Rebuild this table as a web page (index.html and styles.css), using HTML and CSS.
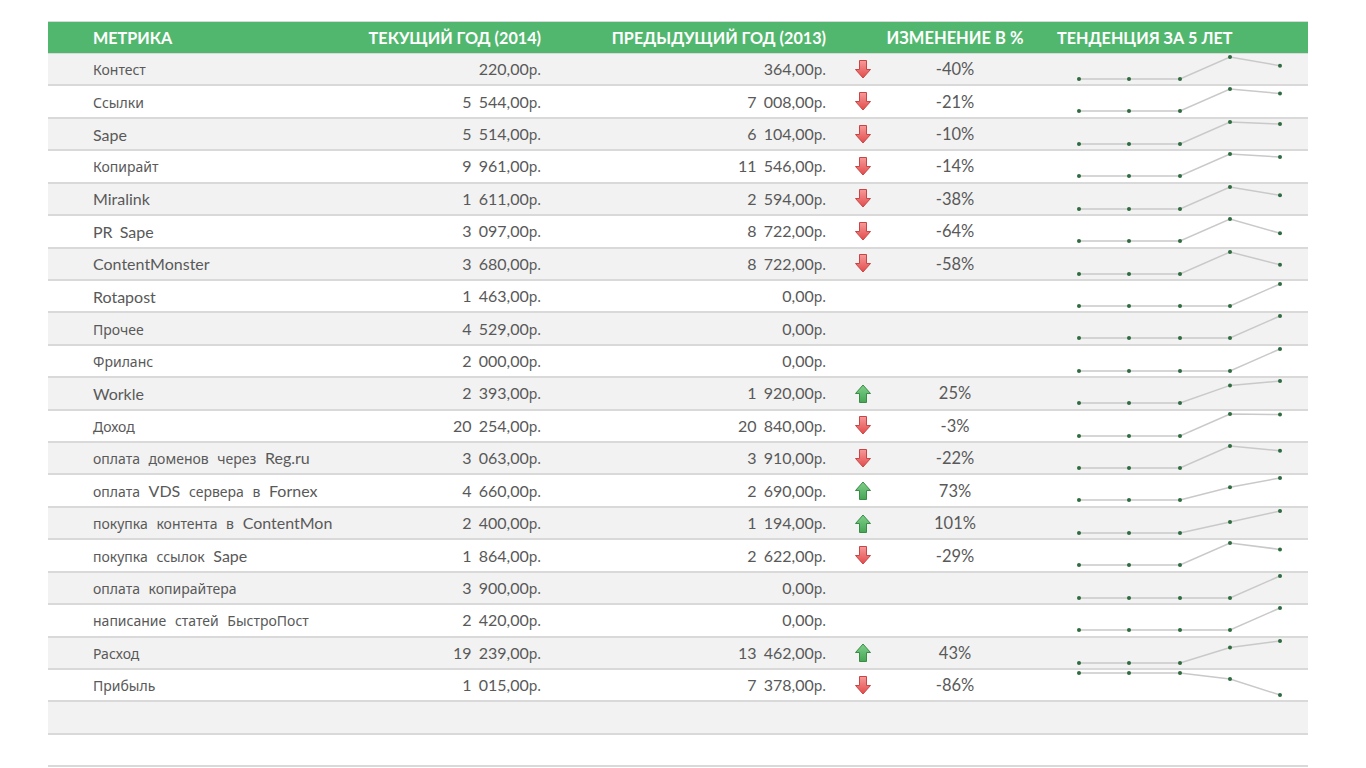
FILE: index.html
```html
<!DOCTYPE html>
<html lang="ru">
<head>
<meta charset="utf-8">
<title>Метрики</title>
<link rel="stylesheet" href="styles.css">
</head>
<body>
<svg class="defs" width="0" height="0" aria-hidden="true">
  <defs>
    <linearGradient id="gr" x1="0" y1="0" x2="0" y2="1">
      <stop offset="0" stop-color="#f79a9a"/>
      <stop offset="1" stop-color="#e24b4b"/>
    </linearGradient>
    <linearGradient id="gg" x1="0" y1="1" x2="0" y2="0">
      <stop offset="0" stop-color="#45a655"/>
      <stop offset="1" stop-color="#7fd08a"/>
    </linearGradient>
    <symbol id="down" viewBox="0 0 16 19">
      <path d="M4.5 0.5H11.5V9.5H15.5L8 18L0.5 9.5H4.5Z" fill="url(#gr)" stroke="#c94444" stroke-width="1"/>
    </symbol>
    <symbol id="up" viewBox="0 0 16 19">
      <path d="M4.5 18.5H11.5V9.5H15.5L8 1L0.5 9.5H4.5Z" fill="url(#gg)" stroke="#3b8a48" stroke-width="1"/>
    </symbol>
  </defs>
</svg>
<div class="sheet">
  <div class="head">
    <div class="c-name">МЕТРИКА</div>
    <div class="c-cur">ТЕКУЩИЙ ГОД (2014)</div>
    <div class="c-prev">ПРЕДЫДУЩИЙ ГОД (2013)</div>
    <div class="c-arrow"></div>
    <div class="c-pct">ИЗМЕНЕНИЕ В %</div>
    <div class="c-trend">ТЕНДЕНЦИЯ ЗА 5 ЛЕТ</div>
  </div>
  <div class="rows">
    <div class="row">
      <div class="c-name"><span class="cy">Контест</span></div>
      <div class="c-cur">220,00<span class="cy">р.</span></div>
      <div class="c-prev">364,00<span class="cy">р.</span></div>
      <div class="c-arrow"><svg class="arr"><use href="#down"/></svg></div>
      <div class="c-pct">-40%</div>
      <div class="c-trend"><svg class="spark" viewBox="0 0 283 30"><polyline points="54,25 104,25 155,25 205,3 255,11.7"/><g><circle cx="54" cy="25"/><circle cx="104" cy="25"/><circle cx="155" cy="25"/><circle cx="205" cy="3"/><circle cx="255" cy="11.7"/></g></svg></div>
    </div>
    <div class="row">
      <div class="c-name"><span class="cy">Ссылки</span></div>
      <div class="c-cur">5 544,00<span class="cy">р.</span></div>
      <div class="c-prev">7 008,00<span class="cy">р.</span></div>
      <div class="c-arrow"><svg class="arr"><use href="#down"/></svg></div>
      <div class="c-pct">-21%</div>
      <div class="c-trend"><svg class="spark" viewBox="0 0 283 30"><polyline points="54,25 104,25 155,25 205,3 255,7.6"/><g><circle cx="54" cy="25"/><circle cx="104" cy="25"/><circle cx="155" cy="25"/><circle cx="205" cy="3"/><circle cx="255" cy="7.6"/></g></svg></div>
    </div>
    <div class="row">
      <div class="c-name">Sape</div>
      <div class="c-cur">5 514,00<span class="cy">р.</span></div>
      <div class="c-prev">6 104,00<span class="cy">р.</span></div>
      <div class="c-arrow"><svg class="arr"><use href="#down"/></svg></div>
      <div class="c-pct">-10%</div>
      <div class="c-trend"><svg class="spark" viewBox="0 0 283 30"><polyline points="54,25 104,25 155,25 205,3 255,5.1"/><g><circle cx="54" cy="25"/><circle cx="104" cy="25"/><circle cx="155" cy="25"/><circle cx="205" cy="3"/><circle cx="255" cy="5.1"/></g></svg></div>
    </div>
    <div class="row">
      <div class="c-name"><span class="cy">Копирайт</span></div>
      <div class="c-cur">9 961,00<span class="cy">р.</span></div>
      <div class="c-prev">11 546,00<span class="cy">р.</span></div>
      <div class="c-arrow"><svg class="arr"><use href="#down"/></svg></div>
      <div class="c-pct">-14%</div>
      <div class="c-trend"><svg class="spark" viewBox="0 0 283 30"><polyline points="54,25 104,25 155,25 205,3 255,6"/><g><circle cx="54" cy="25"/><circle cx="104" cy="25"/><circle cx="155" cy="25"/><circle cx="205" cy="3"/><circle cx="255" cy="6"/></g></svg></div>
    </div>
    <div class="row">
      <div class="c-name">Miralink</div>
      <div class="c-cur">1 611,00<span class="cy">р.</span></div>
      <div class="c-prev">2 594,00<span class="cy">р.</span></div>
      <div class="c-arrow"><svg class="arr"><use href="#down"/></svg></div>
      <div class="c-pct">-38%</div>
      <div class="c-trend"><svg class="spark" viewBox="0 0 283 30"><polyline points="54,25 104,25 155,25 205,3 255,11.3"/><g><circle cx="54" cy="25"/><circle cx="104" cy="25"/><circle cx="155" cy="25"/><circle cx="205" cy="3"/><circle cx="255" cy="11.3"/></g></svg></div>
    </div>
    <div class="row">
      <div class="c-name">PR Sape</div>
      <div class="c-cur">3 097,00<span class="cy">р.</span></div>
      <div class="c-prev">8 722,00<span class="cy">р.</span></div>
      <div class="c-arrow"><svg class="arr"><use href="#down"/></svg></div>
      <div class="c-pct">-64%</div>
      <div class="c-trend"><svg class="spark" viewBox="0 0 283 30"><polyline points="54,25 104,25 155,25 205,3 255,17.2"/><g><circle cx="54" cy="25"/><circle cx="104" cy="25"/><circle cx="155" cy="25"/><circle cx="205" cy="3"/><circle cx="255" cy="17.2"/></g></svg></div>
    </div>
    <div class="row">
      <div class="c-name">ContentMonster</div>
      <div class="c-cur">3 680,00<span class="cy">р.</span></div>
      <div class="c-prev">8 722,00<span class="cy">р.</span></div>
      <div class="c-arrow"><svg class="arr"><use href="#down"/></svg></div>
      <div class="c-pct">-58%</div>
      <div class="c-trend"><svg class="spark" viewBox="0 0 283 30"><polyline points="54,25 104,25 155,25 205,3 255,15.7"/><g><circle cx="54" cy="25"/><circle cx="104" cy="25"/><circle cx="155" cy="25"/><circle cx="205" cy="3"/><circle cx="255" cy="15.7"/></g></svg></div>
    </div>
    <div class="row">
      <div class="c-name">Rotapost</div>
      <div class="c-cur">1 463,00<span class="cy">р.</span></div>
      <div class="c-prev">0,00<span class="cy">р.</span></div>
      <div class="c-arrow"></div>
      <div class="c-pct"></div>
      <div class="c-trend"><svg class="spark" viewBox="0 0 283 30"><polyline points="54,25 104,25 155,25 205,25 255,3"/><g><circle cx="54" cy="25"/><circle cx="104" cy="25"/><circle cx="155" cy="25"/><circle cx="205" cy="25"/><circle cx="255" cy="3"/></g></svg></div>
    </div>
    <div class="row">
      <div class="c-name"><span class="cy">Прочее</span></div>
      <div class="c-cur">4 529,00<span class="cy">р.</span></div>
      <div class="c-prev">0,00<span class="cy">р.</span></div>
      <div class="c-arrow"></div>
      <div class="c-pct"></div>
      <div class="c-trend"><svg class="spark" viewBox="0 0 283 30"><polyline points="54,25 104,25 155,25 205,25 255,3"/><g><circle cx="54" cy="25"/><circle cx="104" cy="25"/><circle cx="155" cy="25"/><circle cx="205" cy="25"/><circle cx="255" cy="3"/></g></svg></div>
    </div>
    <div class="row">
      <div class="c-name"><span class="cy">Фриланс</span></div>
      <div class="c-cur">2 000,00<span class="cy">р.</span></div>
      <div class="c-prev">0,00<span class="cy">р.</span></div>
      <div class="c-arrow"></div>
      <div class="c-pct"></div>
      <div class="c-trend"><svg class="spark" viewBox="0 0 283 30"><polyline points="54,25 104,25 155,25 205,25 255,3"/><g><circle cx="54" cy="25"/><circle cx="104" cy="25"/><circle cx="155" cy="25"/><circle cx="205" cy="25"/><circle cx="255" cy="3"/></g></svg></div>
    </div>
    <div class="row">
      <div class="c-name">Workle</div>
      <div class="c-cur">2 393,00<span class="cy">р.</span></div>
      <div class="c-prev">1 920,00<span class="cy">р.</span></div>
      <div class="c-arrow"><svg class="arr"><use href="#up"/></svg></div>
      <div class="c-pct">25%</div>
      <div class="c-trend"><svg class="spark" viewBox="0 0 283 30"><polyline points="54,25 104,25 155,25 205,7.4 255,3"/><g><circle cx="54" cy="25"/><circle cx="104" cy="25"/><circle cx="155" cy="25"/><circle cx="205" cy="7.4"/><circle cx="255" cy="3"/></g></svg></div>
    </div>
    <div class="row">
      <div class="c-name"><span class="cy">Доход</span></div>
      <div class="c-cur">20 254,00<span class="cy">р.</span></div>
      <div class="c-prev">20 840,00<span class="cy">р.</span></div>
      <div class="c-arrow"><svg class="arr"><use href="#down"/></svg></div>
      <div class="c-pct">-3%</div>
      <div class="c-trend"><svg class="spark" viewBox="0 0 283 30"><polyline points="54,25 104,25 155,25 205,3 255,3.6"/><g><circle cx="54" cy="25"/><circle cx="104" cy="25"/><circle cx="155" cy="25"/><circle cx="205" cy="3"/><circle cx="255" cy="3.6"/></g></svg></div>
    </div>
    <div class="row">
      <div class="c-name"><span class="cy">оплата доменов через </span>Reg.ru</div>
      <div class="c-cur">3 063,00<span class="cy">р.</span></div>
      <div class="c-prev">3 910,00<span class="cy">р.</span></div>
      <div class="c-arrow"><svg class="arr"><use href="#down"/></svg></div>
      <div class="c-pct">-22%</div>
      <div class="c-trend"><svg class="spark" viewBox="0 0 283 30"><polyline points="54,25 104,25 155,25 205,3 255,7.8"/><g><circle cx="54" cy="25"/><circle cx="104" cy="25"/><circle cx="155" cy="25"/><circle cx="205" cy="3"/><circle cx="255" cy="7.8"/></g></svg></div>
    </div>
    <div class="row">
      <div class="c-name"><span class="cy">оплата </span>VDS<span class="cy"> сервера в </span>Fornex</div>
      <div class="c-cur">4 660,00<span class="cy">р.</span></div>
      <div class="c-prev">2 690,00<span class="cy">р.</span></div>
      <div class="c-arrow"><svg class="arr"><use href="#up"/></svg></div>
      <div class="c-pct">73%</div>
      <div class="c-trend"><svg class="spark" viewBox="0 0 283 30"><polyline points="54,25 104,25 155,25 205,12.3 255,3"/><g><circle cx="54" cy="25"/><circle cx="104" cy="25"/><circle cx="155" cy="25"/><circle cx="205" cy="12.3"/><circle cx="255" cy="3"/></g></svg></div>
    </div>
    <div class="row">
      <div class="c-name"><span class="cy">покупка контента в </span>ContentMon</div>
      <div class="c-cur">2 400,00<span class="cy">р.</span></div>
      <div class="c-prev">1 194,00<span class="cy">р.</span></div>
      <div class="c-arrow"><svg class="arr"><use href="#up"/></svg></div>
      <div class="c-pct">101%</div>
      <div class="c-trend"><svg class="spark" viewBox="0 0 283 30"><polyline points="54,25 104,25 155,25 205,14.1 255,3"/><g><circle cx="54" cy="25"/><circle cx="104" cy="25"/><circle cx="155" cy="25"/><circle cx="205" cy="14.1"/><circle cx="255" cy="3"/></g></svg></div>
    </div>
    <div class="row">
      <div class="c-name"><span class="cy">покупка ссылок </span>Sape</div>
      <div class="c-cur">1 864,00<span class="cy">р.</span></div>
      <div class="c-prev">2 622,00<span class="cy">р.</span></div>
      <div class="c-arrow"><svg class="arr"><use href="#down"/></svg></div>
      <div class="c-pct">-29%</div>
      <div class="c-trend"><svg class="spark" viewBox="0 0 283 30"><polyline points="54,25 104,25 155,25 205,3 255,9.4"/><g><circle cx="54" cy="25"/><circle cx="104" cy="25"/><circle cx="155" cy="25"/><circle cx="205" cy="3"/><circle cx="255" cy="9.4"/></g></svg></div>
    </div>
    <div class="row">
      <div class="c-name"><span class="cy">оплата копирайтера</span></div>
      <div class="c-cur">3 900,00<span class="cy">р.</span></div>
      <div class="c-prev">0,00<span class="cy">р.</span></div>
      <div class="c-arrow"></div>
      <div class="c-pct"></div>
      <div class="c-trend"><svg class="spark" viewBox="0 0 283 30"><polyline points="54,25 104,25 155,25 205,25 255,3"/><g><circle cx="54" cy="25"/><circle cx="104" cy="25"/><circle cx="155" cy="25"/><circle cx="205" cy="25"/><circle cx="255" cy="3"/></g></svg></div>
    </div>
    <div class="row">
      <div class="c-name"><span class="cy">написание статей БыстроПост</span></div>
      <div class="c-cur">2 420,00<span class="cy">р.</span></div>
      <div class="c-prev">0,00<span class="cy">р.</span></div>
      <div class="c-arrow"></div>
      <div class="c-pct"></div>
      <div class="c-trend"><svg class="spark" viewBox="0 0 283 30"><polyline points="54,25 104,25 155,25 205,25 255,3"/><g><circle cx="54" cy="25"/><circle cx="104" cy="25"/><circle cx="155" cy="25"/><circle cx="205" cy="25"/><circle cx="255" cy="3"/></g></svg></div>
    </div>
    <div class="row">
      <div class="c-name"><span class="cy">Расход</span></div>
      <div class="c-cur">19 239,00<span class="cy">р.</span></div>
      <div class="c-prev">13 462,00<span class="cy">р.</span></div>
      <div class="c-arrow"><svg class="arr"><use href="#up"/></svg></div>
      <div class="c-pct">43%</div>
      <div class="c-trend"><svg class="spark" viewBox="0 0 283 30"><polyline points="54,25 104,25 155,25 205,9.6 255,3"/><g><circle cx="54" cy="25"/><circle cx="104" cy="25"/><circle cx="155" cy="25"/><circle cx="205" cy="9.6"/><circle cx="255" cy="3"/></g></svg></div>
    </div>
    <div class="row">
      <div class="c-name"><span class="cy">Прибыль</span></div>
      <div class="c-cur">1 015,00<span class="cy">р.</span></div>
      <div class="c-prev">7 378,00<span class="cy">р.</span></div>
      <div class="c-arrow"><svg class="arr"><use href="#down"/></svg></div>
      <div class="c-pct">-86%</div>
      <div class="c-trend"><svg class="spark" viewBox="0 0 283 30"><polyline points="54,3 104,3 155,3 205,9 255,25"/><g><circle cx="54" cy="3"/><circle cx="104" cy="3"/><circle cx="155" cy="3"/><circle cx="205" cy="9"/><circle cx="255" cy="25"/></g></svg></div>
    </div>
    <div class="row empty"></div>
    <div class="row empty"></div>
  </div>
</div>
</body>
</html>
```

FILE: styles.css
```css
* { box-sizing: border-box; }

body {
  margin: 0;
  background: #ffffff;
  font-family: Lato, "Open Sans", "Noto Sans", sans-serif;
  color: #595959;
}

.defs { position: absolute; width: 0; height: 0; overflow: hidden; }

.sheet {
  margin-left: 48px;
  padding-top: 21px;
  width: 1260px;
}

.head,
.row {
  display: grid;
  grid-template-columns: 312px 181px 285px 59px 140px 283px;
  align-items: center;
}

.head {
  height: 33px;
  background: #52b76e;
  border-top: 1px solid #d9d9d9;
  border-bottom: 1px solid #d9d9d9;
  color: #ffffff;
  font-weight: 700;
  font-size: 16.2px;
  white-space: nowrap;
}

.head .c-trend { padding-left: 32px; }

.row {
  height: 32.43px;
  border-bottom: 2px solid #d9d9d9;
  font-size: 16px;
  word-spacing: 3px;
  white-space: nowrap;
}

.rows .row:nth-child(odd) { background: #f2f2f2; }
.rows .row:nth-child(even) { background: #ffffff; }

.c-name { padding-left: 45px; }
.c-cur, .c-prev { text-align: right; }
.c-arrow { padding-left: 29px; display: flex; align-items: center; }
.c-pct { text-align: center; font-size: 16.5px; }
.row .c-trend { align-self: stretch; }

.cy {
  font-family: "Noto Sans", "DejaVu Sans", sans-serif;
  font-size: 14px;
  word-spacing: 5px;
}

.arr { width: 16px; height: 19px; display: block; }

.spark {
  display: block;
  width: 283px;
  height: 30px;
  overflow: visible;
}
.spark polyline {
  fill: none;
  stroke: #c9c9c9;
  stroke-width: 1.5;
}
.spark circle {
  r: 2;
  fill: #2e6b3f;
}
```
